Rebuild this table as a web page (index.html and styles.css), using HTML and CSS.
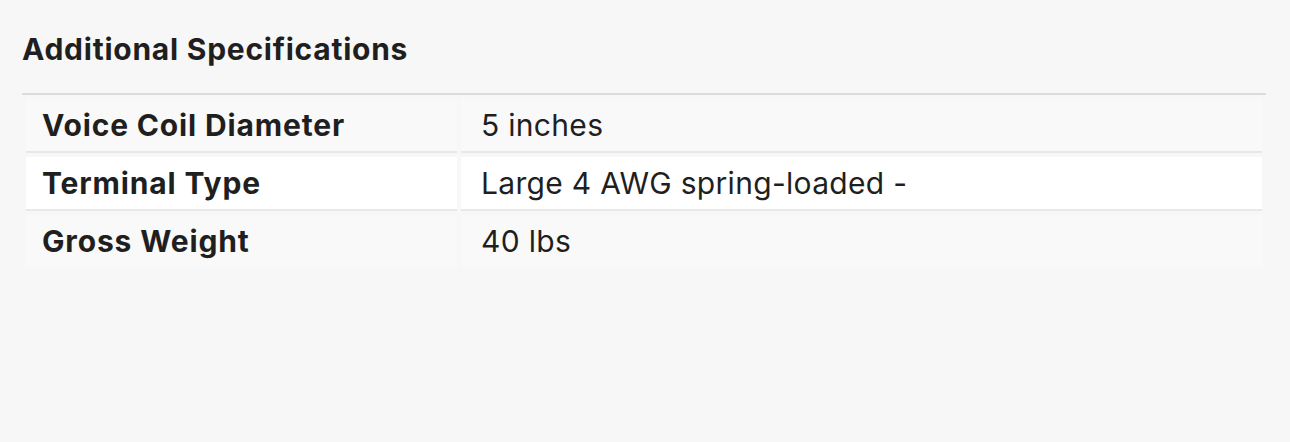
FILE: index.html
```html
<!DOCTYPE html>
<html lang="en">
<head>
<meta charset="utf-8">
<title>Additional Specifications</title>
<link rel="stylesheet" href="styles.css">
</head>
<body>
<section class="specs">
  <h2 class="specs-title">Additional Specifications</h2>
  <table class="specs-table">
    <tbody>
      <tr class="row-odd">
        <th class="spec-label">Voice Coil Diameter</th>
        <td class="spec-value">5 inches</td>
      </tr>
      <tr class="row-even">
        <th class="spec-label">Terminal Type</th>
        <td class="spec-value">Large 4 AWG spring-loaded -</td>
      </tr>
      <tr class="row-odd row-last">
        <th class="spec-label">Gross Weight</th>
        <td class="spec-value">40 lbs</td>
      </tr>
    </tbody>
  </table>
</section>
</body>
</html>
```

FILE: styles.css
```css
html, body {
  margin: 0;
  padding: 0;
  background: #f7f7f7;
}
body {
  font-family: Inter, "Noto Sans", "Liberation Sans", sans-serif;
  color: #1f1f1f;
}
.specs {
  padding: 29px 24px 0 22px;
}
.specs-title {
  margin: 0 0 24px 0;
  font-size: 30px;
  font-weight: 700;
  line-height: 40px;
  letter-spacing: 0.75px;
}
.specs-table {
  width: 100%;
  border-collapse: separate;
  border-spacing: 4px;
  border-top: 2px solid #dcdcdc;
}
.spec-label,
.spec-value {
  height: 52px;
  padding: 0;
  font-size: 30px;
  line-height: 36px;
  vertical-align: middle;
  text-align: left;
  border-bottom: 2px solid #e8e8e8;
}
.spec-label {
  width: 431px;
  padding-left: 16px;
  box-sizing: border-box;
  font-weight: 700;
  letter-spacing: 0.85px;
}
.spec-value {
  padding-left: 20px;
  font-weight: 400;
  letter-spacing: 0.3px;
}
.row-odd .spec-label,
.row-odd .spec-value {
  background: #f9f9f9;
}
.row-even .spec-label,
.row-even .spec-value {
  background: #ffffff;
}
.row-last .spec-label,
.row-last .spec-value {
  border-bottom: none;
}
```
